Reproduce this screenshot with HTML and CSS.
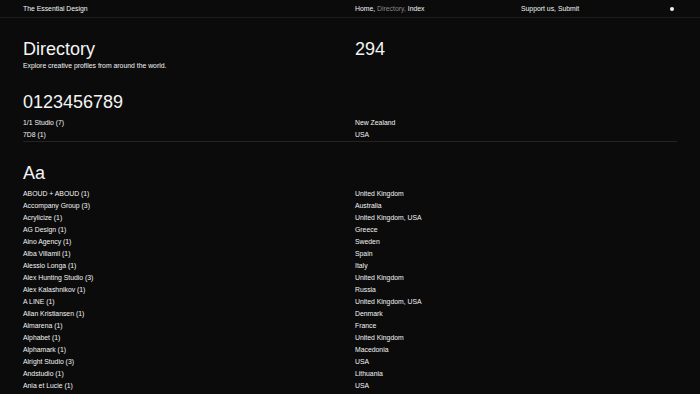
FILE: index.html
```html
<!DOCTYPE html>
<html lang="en">
<head>
    <meta charset="UTF-8">
    <meta name="viewport" content="width=device-width, initial-scale=1.0">
    <title>Directory - The Essential Design</title>
    <link rel="stylesheet" href="styles.css">
</head>
<body>
    <header class="topbar">
        <div class="topbar-cell">The Essential Design</div>
        <div class="topbar-cell"></div>
        <nav class="topbar-cell">Home, <span class="muted">Directory,</span> Index</nav>
        <div class="topbar-cell topbar-end">
            <span>Support us, Submit</span>
            <span class="dot"></span>
        </div>
    </header>

    <main class="page">
        <section class="intro">
            <div>
                <h1 class="title">Directory</h1>
                <p class="lead">Explore creative profiles from around the world.</p>
            </div>
            <div class="title">294</div>
        </section>

        <section class="group">
            <h2 class="title">0123456789</h2>
            <ul class="rows">
                <li class="row"><span>1/1 Studio (7)</span><span>New Zealand</span></li>
                <li class="row"><span>7D8 (1)</span><span>USA</span></li>
            </ul>
        </section>

        <section class="group">
            <h2 class="title">Aa</h2>
            <ul class="rows">
                <li class="row"><span>ABOUD + ABOUD (1)</span><span>United Kingdom</span></li>
                <li class="row"><span>Accompany Group (3)</span><span>Australia</span></li>
                <li class="row"><span>Acrylicize (1)</span><span>United Kingdom, USA</span></li>
                <li class="row"><span>AG Design (1)</span><span>Greece</span></li>
                <li class="row"><span>Aino Agency (1)</span><span>Sweden</span></li>
                <li class="row"><span>Alba Villamil (1)</span><span>Spain</span></li>
                <li class="row"><span>Alessio Longa (1)</span><span>Italy</span></li>
                <li class="row"><span>Alex Hunting Studio (3)</span><span>United Kingdom</span></li>
                <li class="row"><span>Alex Kalashnikov (1)</span><span>Russia</span></li>
                <li class="row"><span>A LINE (1)</span><span>United Kingdom, USA</span></li>
                <li class="row"><span>Allan Kristiansen (1)</span><span>Denmark</span></li>
                <li class="row"><span>Almarena (1)</span><span>France</span></li>
                <li class="row"><span>Alphabet (1)</span><span>United Kingdom</span></li>
                <li class="row"><span>Alphamark (1)</span><span>Macedonia</span></li>
                <li class="row"><span>Alright Studio (3)</span><span>USA</span></li>
                <li class="row"><span>Andstudio (1)</span><span>Lithuania</span></li>
                <li class="row"><span>Ania et Lucie (1)</span><span>USA</span></li>
            </ul>
        </section>
    </main>
</body>
</html>
```

FILE: styles.css
```css
body {
    margin: 0;
    background: #0b0b0b;
    color: #f4f4f4;
    font-family: "Liberation Sans", Arial, sans-serif;
    font-size: 6.85px;
    line-height: 12px;
    overflow: hidden;
}
.topbar {
    display: grid;
    grid-template-columns: repeat(4, 1fr);
    column-gap: 10px;
    height: 17px;
    padding: 0 23px;
    line-height: 17px;
    border-bottom: 1px solid #1c1c1c;
}
.topbar-end {
    display: flex;
    justify-content: space-between;
    align-items: center;
}
.muted {
    color: #8a8a8a;
}
.dot {
    width: 4px;
    height: 4px;
    margin-right: 3px;
    border-radius: 50%;
    background: #f4f4f4;
}
.page {
    padding: 0 23px;
}
.intro {
    display: grid;
    grid-template-columns: 1fr 1fr;
    column-gap: 10px;
    padding-top: 22px;
}
.title {
    margin: 0;
    font-size: 18px;
    font-weight: 400;
    line-height: 18px;
}
.lead {
    margin: 2px 0 0;
}
.group {
    padding-top: 21px;
    border-bottom: 1px solid #242424;
}
.group .title {
    margin-bottom: 5.5px;
}
.group + .group {
    padding-top: 22px;
    border-bottom: none;
}
.group + .group .title {
    margin-bottom: 6.5px;
}
.rows {
    list-style: none;
    margin: 0;
    padding: 0;
}
.row {
    display: grid;
    grid-template-columns: 1fr 1fr;
    column-gap: 10px;
    height: 12px;
}
```
